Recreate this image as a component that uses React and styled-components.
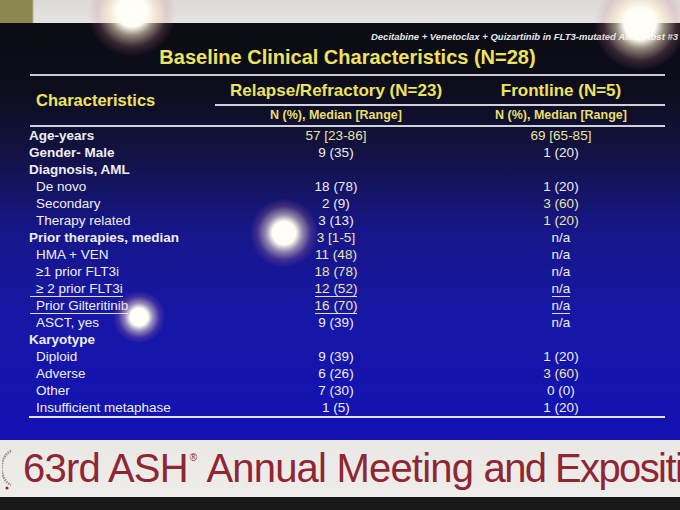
import React from 'react';
import styled, { createGlobalStyle } from 'styled-components';

const GlobalStyle = createGlobalStyle`
  html, body { margin: 0; padding: 0; background: #111; }
  body { font-family: "Liberation Sans", Arial, sans-serif; }
`;

const Photo = styled.div`
  position: relative;
  width: 680px;
  height: 510px;
  overflow: hidden;
  display: flex;
  flex-direction: column;
  background: #151515;
`;

const Wall = styled.div`
  height: 23px;
  flex-shrink: 0;
  background:
    linear-gradient(90deg, #8c8652 0, #8c8652 32px, transparent 34px),
    linear-gradient(180deg, #dcdad8, #e6e4e2);
`;

const Slide = styled.div`
  height: 417px;
  flex-shrink: 0;
  box-sizing: border-box;
  padding: 8px 15px 0 30px;
  display: flex;
  flex-direction: column;
  background: linear-gradient(180deg,
    #0b0b12 0%, #0d0d1c 16%, #121240 30%, #16168a 50%, #1717a6 70%, #1212b4 100%);
  color: #ecebf3;
`;

const Source = styled.div`
  align-self: flex-end;
  margin-right: -13px;
  font-size: 9.5px;
  font-weight: bold;
  font-style: italic;
  color: #e6e6ea;
  white-space: nowrap;
`;

const Title = styled.h1`
  margin: 4px 0 0 0;
  padding-bottom: 5px;
  text-align: center;
  font-size: 20px;
  font-weight: bold;
  color: #eee35c;
  border-bottom: 2px solid #c9c9d2;
`;

const Table = styled.div`
  display: grid;
  grid-template-columns: 185px 242px 1fr;
`;

const HeadLabel = styled.div`
  grid-row: span 2;
  display: flex;
  align-items: center;
  padding: 0 0 0 6px;
  font-size: 16.5px;
  font-weight: bold;
  color: #eee35c;
  border-bottom: 2px solid #d0d0d8;
`;

const HeadGroup = styled.div`
  padding: 5px 0 4px;
  text-align: center;
  font-size: 17px;
  line-height: 19px;
  font-weight: bold;
  color: #eee35c;
  border-bottom: 2px solid #d0d0d8;
`;

const HeadSub = styled.div`
  padding: 2px 0 2px;
  text-align: center;
  font-size: 12.5px;
  line-height: 15px;
  font-weight: bold;
  color: #e9df6a;
  border-bottom: 2px solid #d0d0d8;
`;

const Label = styled.div`
  height: 17px;
  line-height: 17px;
  font-size: 13.5px;
  white-space: nowrap;
  font-weight: ${p => (p.$bold ? 'bold' : 'normal')};
  padding-left: ${p => (p.$bold ? '0' : '7px')};
  margin-left: -1px;
  color: #eeeef4;
  ${p => p.$under && 'span { border-bottom: 1.5px solid #dcdce4; padding: 0 0 0 6px; margin-left: -6px; }'}
  ${p => p.$last && 'border-bottom: 2px solid #e2e2ea;'}
`;

const Value = styled.div`
  height: 17px;
  line-height: 17px;
  font-size: 13.5px;
  text-align: center;
  color: ${p => (p.$hi ? '#ece6a0' : '#eeeef4')};
  span { ${p => p.$under && 'border-bottom: 1.5px solid #dcdce4;'} }
  ${p => p.$last && 'border-bottom: 2px solid #e2e2ea;'}
`;

const Footer = styled.div`
  height: 57px;
  flex-shrink: 0;
  display: flex;
  align-items: center;
  gap: 9px;
  padding-left: 2px;
  background: linear-gradient(180deg, #e9e8e4, #eeedea);
`;

const Seal = styled.svg`
  width: 12px;
  height: 44px;
  flex-shrink: 0;
`;

const Meeting = styled.div`
  font-size: 40px;
  letter-spacing: -0.8px;
  color: #8e2634;
  white-space: nowrap;
  sup { font-size: 10px; vertical-align: top; position: relative; top: 6px; margin: 0 10px 0 2px; }
`;

const Tight = styled.span`
  letter-spacing: -1.6px;
`;

const Base = styled.div`
  flex: 1;
  background: #191919;
`;

const Glare = styled.div`
  position: absolute;
  border-radius: 50%;
  pointer-events: none;
  width: ${p => p.$r * 2}px;
  height: ${p => p.$r * 2}px;
  left: ${p => p.$x - p.$r}px;
  top: ${p => p.$y - p.$r}px;
  background: radial-gradient(circle,
    rgba(255,255,250,1) 0%, rgba(255,254,245,1) 24%,
    rgba(255,236,205,0.55) 38%, rgba(210,130,150,0.22) 56%, rgba(255,255,255,0) 72%);
`;

const rows = [
  { l: 'Age-years', b: true, a: '57 [23-86]', f: '69 [65-85]', ah: true, fh: true },
  { l: 'Gender- Male', b: true, a: '9 (35)', f: '1 (20)' },
  { l: 'Diagnosis, AML', b: true, a: '', f: '' },
  { l: 'De novo', a: '18 (78)', f: '1 (20)' },
  { l: 'Secondary', a: '2 (9)', f: '3 (60)', fh: true },
  { l: 'Therapy related', a: '3 (13)', f: '1 (20)', fh: true },
  { l: 'Prior therapies, median', b: true, a: '3 [1-5]', f: 'n/a', ah: true },
  { l: 'HMA + VEN', a: '11 (48)', f: 'n/a', ah: true },
  { l: '≥1 prior FLT3i', a: '18 (78)', f: 'n/a', ah: true },
  { l: '≥ 2 prior FLT3i', a: '12 (52)', f: 'n/a', ah: true, u: true },
  { l: 'Prior Gilteritinib', a: '16 (70)', f: 'n/a', ah: true, u: true },
  { l: 'ASCT, yes', a: '9 (39)', f: 'n/a' },
  { l: 'Karyotype', b: true, a: '', f: '' },
  { l: 'Diploid', a: '9 (39)', f: '1 (20)' },
  { l: 'Adverse', a: '6 (26)', f: '3 (60)', fh: true },
  { l: 'Other', a: '7 (30)', f: '0 (0)' },
  { l: 'Insufficient metaphase', a: '1 (5)', f: '1 (20)' },
];

export default function App() {
  return (
    <>
      <GlobalStyle />
      <Photo>
        <Wall />
        <Slide>
          <Source>Decitabine + Venetoclax + Quizartinib in FLT3-mutated AML, Abst #3</Source>
          <Title>Baseline Clinical Characteristics (N=28)</Title>
          <Table>
            <HeadLabel>Characteristics</HeadLabel>
            <HeadGroup>Relapse/Refractory (N=23)</HeadGroup>
            <HeadGroup>Frontline (N=5)</HeadGroup>
            <HeadSub>N (%), Median [Range]</HeadSub>
            <HeadSub>N (%), Median [Range]</HeadSub>
            {rows.map((r, i) => {
              const last = i === rows.length - 1;
              return (
                <React.Fragment key={r.l}>
                  <Label $bold={r.b} $under={r.u} $last={last}><span>{r.l}</span></Label>
                  <Value $hi={r.ah} $under={r.u} $last={last}><span>{r.a}</span></Value>
                  <Value $hi={r.fh} $under={r.u} $last={last}><span>{r.f}</span></Value>
                </React.Fragment>
              );
            })}
          </Table>
        </Slide>
        <Footer>
          <Seal viewBox="0 0 12 44">
            <path d="M9 4 A14 18 0 0 0 9 38" fill="none" stroke="#9a8f8f" strokeWidth="2.5" strokeDasharray="1.5 1" />
            <circle cx="5" cy="41" r="1.5" fill="#8e2634" />
          </Seal>
          <Meeting>63rd ASH<sup>®</sup>Annual Meeting <Tight>and Exposition</Tight></Meeting>
        </Footer>
        <Base />
        <Glare $x={132} $y={12} $r={44} />
        <Glare $x={640} $y={24} $r={46} />
        <Glare $x={284} $y={233} $r={34} />
        <Glare $x={139} $y={317} $r={26} />
      </Photo>
    </>
  );
}
